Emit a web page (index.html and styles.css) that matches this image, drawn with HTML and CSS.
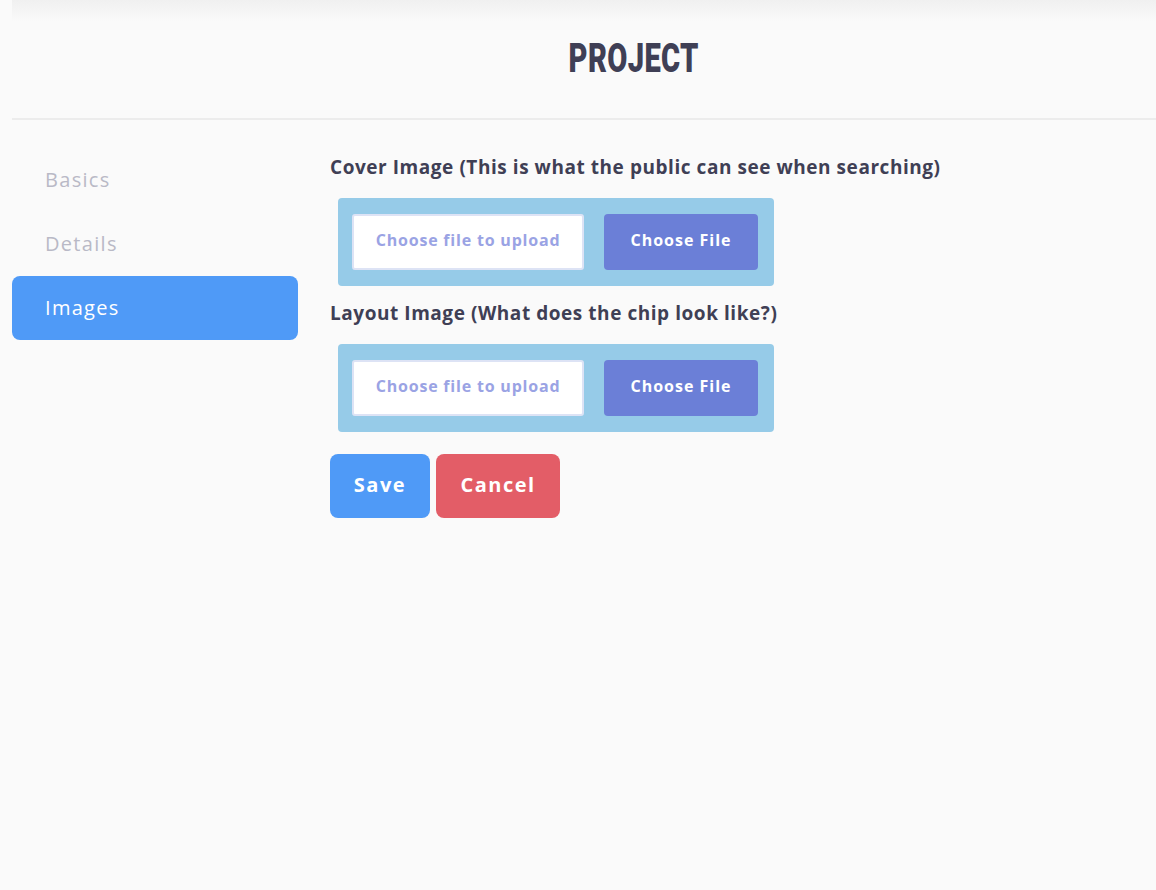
FILE: index.html
```html
<!DOCTYPE html>
<html lang="en">
<head>
	<meta charset="UTF-8">
	<title>Project</title>
	<link rel="stylesheet" href="styles.css">
</head>
<body>
	<!-- header -->
	<div class="top">
		<h1>PROJECT</h1>
	</div>
	<div class="main">
		<!-- side menu -->
		<ul class="side">
			<li><a href="javascript:;">Basics</a></li>
			<li><a href="javascript:;">Details</a></li>
			<li class="on"><a href="javascript:;">Images</a></li>
		</ul>
		<!-- form -->
		<div class="form">
			<div class="field">
				<p class="label">Cover Image (This is what the public can see when searching)</p>
				<div class="upload">
					<div class="name">Choose file to upload</div>
					<div class="pick">Choose File</div>
				</div>
			</div>
			<div class="field">
				<p class="label">Layout Image (What does the chip look like?)</p>
				<div class="upload">
					<div class="name">Choose file to upload</div>
					<div class="pick">Choose File</div>
				</div>
			</div>
			<div class="btns">
				<a href="javascript:;" class="save">Save</a>
				<a href="javascript:;" class="cancel">Cancel</a>
			</div>
		</div>
	</div>
</body>
</html>
```

FILE: styles.css
```css
* {
	margin: 0;
	padding: 0;
	box-sizing: border-box;
}
body {
	background-color: #fafafa;
	font-family: "Open Sans", "DejaVu Sans", sans-serif;
	color: #3f3f55;
	min-height: 890px;
}
a {
	text-decoration: none;
}
li {
	list-style: none;
}
.top {
	background: linear-gradient(#f0f0f0, #fafafa 22px);
	height: 120px;
	padding-left: 100px;
	border-bottom: 2px solid #ececec;
	margin-left: 12px;
	display: flex;
	align-items: center;
	justify-content: center;
}
.top h1 {
	display: inline-block;
	font-family: Roboto, "Liberation Sans", sans-serif;
	font-weight: 900;
	font-size: 41px;
	letter-spacing: 0.5px;
	color: #3f3f55;
	margin-top: -2px;
	transform: scaleX(0.71);
}
.main {
	display: flex;
	padding: 28px 0 0 12px;
	gap: 32px;
}
.side {
	width: 286px;
}
.side li a {
	display: block;
	height: 64px;
	line-height: 64px;
	padding-left: 33px;
	font-size: 20px;
	letter-spacing: 1.3px;
	color: #b9b9c6;
	border-radius: 8px;
}
.side li.on a {
	background-color: #4f9af7;
	color: #fff;
}
.form {
	padding-top: 6px;
}
.label {
	font-size: 19px;
	font-weight: 700;
	letter-spacing: 0.55px;
	line-height: 26px;
}
.upload {
	display: flex;
	gap: 20px;
	width: 436px;
	margin: 18px 0 14px 8px;
	padding: 16px 16px 16px 14px;
	background-color: #96cbe8;
	border-radius: 4px;
}
.name {
	width: 232px;
	height: 56px;
	line-height: 48px;
	text-align: center;
	background-color: #fff;
	border: 2px solid #dde3f5;
	border-radius: 3px;
	font-size: 16px;
	font-weight: 700;
	letter-spacing: 0.8px;
	color: #9aa3e4;
}
.pick {
	width: 154px;
	height: 56px;
	line-height: 52px;
	text-align: center;
	background-color: #6b7fd7;
	border-radius: 4px;
	font-size: 16px;
	font-weight: 700;
	letter-spacing: 1px;
	color: #fff;
}
.btns {
	display: flex;
	gap: 6px;
	margin-top: 22px;
}
.btns a {
	height: 64px;
	line-height: 62px;
	text-align: center;
	border-radius: 8px;
	font-size: 20px;
	font-weight: 700;
	letter-spacing: 1.5px;
	color: #fff;
}
.save {
	width: 100px;
	background-color: #4f9af7;
}
.cancel {
	width: 124px;
	background-color: #e35d67;
}
```
